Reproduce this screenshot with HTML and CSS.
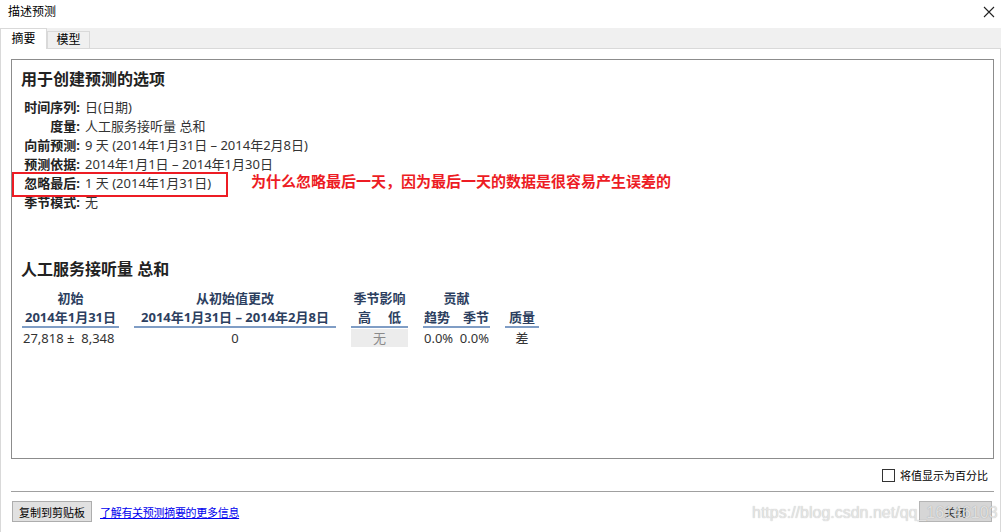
FILE: index.html
```html
<!DOCTYPE html>
<html>

<head>
    <title>描述预测</title>
    <link rel="stylesheet" href="styles.css">
</head>

<body>
    <div class="titlebar">
        <span>描述预测</span>
        <svg class="close-x" width="12" height="12" viewBox="0 0 12 12">
            <path d="M1 1 L11 11 M11 1 L1 11" stroke="#222" stroke-width="1.1" fill="none" />
        </svg>
    </div>

    <div class="tabs">
        <div class="tab active">摘要</div>
        <div class="tab">模型</div>
    </div>

    <div class="panel">
        <div class="summary">
            <h2 class="heading">用于创建预测的选项</h2>
            <div class="options">
                <div class="opt"><span class="opt-label">时间序列:</span><span>日(日期)</span></div>
                <div class="opt"><span class="opt-label">度量:</span><span>人工服务接听量 总和</span></div>
                <div class="opt"><span class="opt-label">向前预测:</span><span>9 天 (2014年1月31日 – 2014年2月8日)</span></div>
                <div class="opt"><span class="opt-label">预测依据:</span><span>2014年1月1日 – 2014年1月30日</span></div>
                <div class="opt marked">
                    <span class="opt-label">忽略最后:</span><span>1 天 (2014年1月31日)</span>
                    <span class="note">为什么忽略最后一天，因为最后一天的数据是很容易产生误差的</span>
                </div>
                <div class="opt"><span class="opt-label">季节模式:</span><span>无</span></div>
            </div>

            <h2 class="heading measure">人工服务接听量 总和</h2>
            <div class="results">
                <div class="th">初始</div>
                <div class="th">从初始值更改</div>
                <div class="th">季节影响</div>
                <div class="th">贡献</div>
                <div class="th"></div>

                <div class="th sub">2014年1月31日</div>
                <div class="th sub">2014年1月31日 – 2014年2月8日</div>
                <div class="th sub split wide"><span>高</span><span>低</span></div>
                <div class="th sub split"><span>趋势</span><span>季节</span></div>
                <div class="th sub">质量</div>

                <div class="td left">27,818 ±&nbsp; 8,348</div>
                <div class="td">0</div>
                <div class="td none">无</div>
                <div class="td split"><span>0.0%</span><span>0.0%</span></div>
                <div class="td">差</div>
            </div>
        </div>

        <div class="percent-row">
            <span class="checkbox"></span>
            <span>将值显示为百分比</span>
        </div>

        <div class="footer">
            <button class="btn">复制到剪贴板</button>
            <a class="more" href="#">了解有关预测摘要的更多信息</a>
            <button class="btn close">关闭</button>
        </div>
    </div>

    <div class="watermark">https://blog.csdn.net/qq_16146103</div>
</body>

</html>
```

FILE: styles.css
```css
body {
    margin: 0;
    width: 1004px;
    height: 532px;
    overflow: hidden;
    position: relative;
    background: #fff;
    color: #333;
    font-family: "Noto Sans", "Noto Sans CJK SC", sans-serif;
}

.titlebar {
    height: 28px;
    display: flex;
    justify-content: space-between;
    align-items: flex-start;
    padding: 5px 9px 0 8px;
    box-sizing: border-box;
    font-size: 12px;
    line-height: 14px;
    color: #000;
}

.close-x {
    margin-top: 1px;
}

.tabs {
    display: flex;
    align-items: flex-end;
    width: 1001px;
    height: 21px;
    box-sizing: border-box;
    background: #f0f0f0;
    border-bottom: 1px solid #d9d9d9;
}

.tab {
    height: 17px;
    width: 43px;
    box-sizing: border-box;
    border: 1px solid #d9d9d9;
    border-bottom: none;
    font-size: 12px;
    line-height: 16px;
    text-align: center;
    color: #000;
}

.tab.active {
    width: 47px;
    height: 21px;
    margin-bottom: -1px;
    background: #fff;
    line-height: 20px;
}

.panel {
    width: 1001px;
    height: 483px;
    box-sizing: border-box;
    border-left: 1px solid #d9d9d9;
    border-right: 1px solid #d9d9d9;
    padding: 10px 6px 0 10px;
}

.summary {
    height: 400px;
    box-sizing: border-box;
    border: 1px solid #8c8c8c;
    padding: 9px 9px 0 9px;
}

.heading {
    margin: 0;
    font-size: 16px;
    line-height: 20px;
    font-weight: bold;
    color: #222;
}

.options {
    margin-top: 9px;
    font-size: 13px;
    line-height: 19px;
}

.opt {
    display: grid;
    grid-template-columns: 59px auto;
    column-gap: 5px;
    justify-content: start;
}

.opt-label {
    text-align: right;
    font-weight: bold;
    color: #222;
}

.marked {
    position: relative;
}

.marked::after {
    content: "";
    position: absolute;
    left: -9px;
    top: -2px;
    width: 216px;
    height: 25px;
    box-sizing: border-box;
    border: 2px solid #ed1c24;
}

.note {
    position: absolute;
    left: 230px;
    top: -3px;
    font-size: 15px;
    line-height: 20px;
    font-weight: bold;
    color: #ed1c24;
    white-space: nowrap;
}

.measure {
    margin-top: 47px;
}

.results {
    display: grid;
    grid-template-columns: 97px 202px 57px 67px 34px;
    column-gap: 15px;
    margin: 10px 0 0 1px;
    font-size: 13px;
}

.th {
    font-weight: bold;
    color: #2d3f5f;
    text-align: center;
    line-height: 19px;
    white-space: nowrap;
}

.th.sub {
    line-height: 18px;
    border-bottom: 2px solid #7f9dc5;
}

.split {
    display: flex;
    justify-content: space-between;
    padding: 0 1px;
}

.split.wide {
    padding: 0 7px;
}

.td {
    text-align: center;
    line-height: 18px;
    margin-top: 1px;
    white-space: nowrap;
}

.td.left {
    text-align: left;
    padding-left: 1px;
}

.td.none {
    background: #ececec;
    color: #8a8a8a;
}

.percent-row {
    height: 32px;
    display: flex;
    justify-content: flex-end;
    align-items: center;
    padding-right: 6px;
    font-size: 11px;
    color: #000;
    border-bottom: 1px solid #a0a0a0;
}

.checkbox {
    width: 13px;
    height: 13px;
    box-sizing: border-box;
    border: 1px solid #333;
    background: #fff;
    margin-right: 5px;
}

.footer {
    display: flex;
    align-items: center;
    padding-top: 9px;
}

.btn {
    height: 21px;
    padding: 0 6px;
    margin-left: 1px;
    background: #e1e1e1;
    border: 1px solid #adadad;
    font-family: "Noto Sans CJK SC", sans-serif;
    font-size: 11px;
    color: #000;
}

.more {
    margin-left: 8px;
    font-size: 11px;
    letter-spacing: -0.3px;
    color: #0000ee;
}

.btn.close {
    margin-left: auto;
    margin-right: 2px;
    width: 73px;
    background: #d6d6d6;
    border-color: #b5b5b5;
    color: #333;
}

.watermark {
    position: absolute;
    left: 752px;
    top: 502px;
    font-family: "Liberation Sans", Arial, sans-serif;
    font-size: 16px;
    line-height: 22px;
    color: rgba(236, 236, 236, 0.85);
    text-shadow: 0 0 1px rgba(0, 0, 0, 0.3);
    white-space: nowrap;
}
```
